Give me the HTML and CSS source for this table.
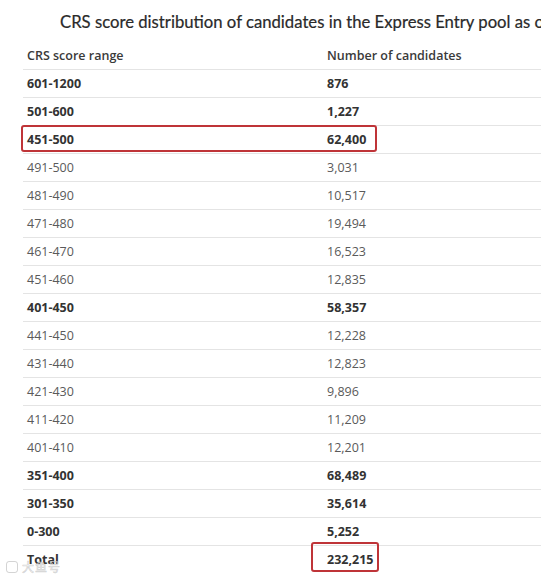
FILE: index.html
```html
<!DOCTYPE html>
<html>
<head>
<meta charset="utf-8">
<link rel="stylesheet" href="styles.css">
</head>
<body>
<div class="page">
  <h1 class="title">CRS score distribution of candidates in the Express Entry pool as of</h1>
  <table class="crs">
    <thead>
      <tr><th class="c1">CRS score range</th><th class="c2">Number of candidates</th></tr>
    </thead>
    <tbody>
      <tr class="b"><td>601-1200</td><td>876</td></tr>
      <tr class="b"><td>501-600</td><td>1,227</td></tr>
      <tr class="b hl"><td class="mark">451-500</td><td>62,400</td></tr>
      <tr><td>491-500</td><td>3,031</td></tr>
      <tr><td>481-490</td><td>10,517</td></tr>
      <tr><td>471-480</td><td>19,494</td></tr>
      <tr><td>461-470</td><td>16,523</td></tr>
      <tr><td>451-460</td><td>12,835</td></tr>
      <tr class="b"><td>401-450</td><td>58,357</td></tr>
      <tr><td>441-450</td><td>12,228</td></tr>
      <tr><td>431-440</td><td>12,823</td></tr>
      <tr><td>421-430</td><td>9,896</td></tr>
      <tr><td>411-420</td><td>11,209</td></tr>
      <tr><td>401-410</td><td>12,201</td></tr>
      <tr class="b"><td>351-400</td><td>68,489</td></tr>
      <tr class="b"><td>301-350</td><td>35,614</td></tr>
      <tr class="b"><td>0-300</td><td>5,252</td></tr>
      <tr class="b total"><td>Total</td><td class="tmark">232,215</td></tr>
    </tbody>
  </table>
  <div class="wm"><span class="wm-icon"></span>大鱼号</div>
</div>
</body>
</html>
```

FILE: styles.css
```css
html, body {
  margin: 0;
  padding: 0;
  background: #ffffff;
  overflow: hidden;
}
.page {
  position: relative;
  width: 541px;
  height: 578px;
  overflow: hidden;
}
.title {
  margin: 0;
  padding: 10px 0 0 60px;
  height: 32px;
  box-sizing: border-box;
  white-space: nowrap;
  font-family: Lato, "Open Sans", sans-serif;
  font-weight: 400;
  font-size: 16.7px;
  line-height: 24px;
  color: #2a2a2a;
  -webkit-text-stroke: 0.2px #2a2a2a;
}
.crs {
  margin: 10px 0 0 23px;
  width: 640px;
  border-collapse: collapse;
  font-family: "Open Sans", sans-serif;
  font-size: 12.5px;
  color: #5a5a5a;
}
.crs th, .crs td {
  text-align: left;
  padding: 0 4px;
  height: 27px;
  line-height: 27px;
  border-bottom: 1px solid #e4e4e4;
  white-space: nowrap;
}
.crs th {
  font-weight: 600;
  color: #3a3a3a;
}
.crs .c1 {
  width: 292px;
}
.crs tr.b td {
  font-weight: 700;
  color: #333333;
}
.crs tr.total td {
  border-bottom: none;
}
.mark, .tmark {
  position: relative;
}
.mark::after {
  content: "";
  position: absolute;
  left: -2px;
  top: -1px;
  width: 352px;
  height: 23px;
  border: 2px solid #bf3438;
  border-radius: 3px;
}
.tmark::after {
  content: "";
  position: absolute;
  left: -12px;
  top: -4px;
  width: 64px;
  height: 26px;
  border: 2px solid #bf3438;
  border-radius: 3px;
}
.wm {
  position: absolute;
  left: 6px;
  top: 560px;
  display: flex;
  align-items: center;
  gap: 4px;
  font-family: "Noto Sans CJK SC", sans-serif;
  font-size: 12px;
  line-height: 14px;
  color: rgba(255,255,255,0.7);
  -webkit-text-stroke: 0.6px rgba(160,160,160,0.5);
  letter-spacing: 1px;
}
.wm-icon {
  width: 12px;
  height: 12px;
  border: 1.5px solid rgba(170,170,170,0.5);
  border-radius: 3px;
  box-sizing: border-box;
}
```
